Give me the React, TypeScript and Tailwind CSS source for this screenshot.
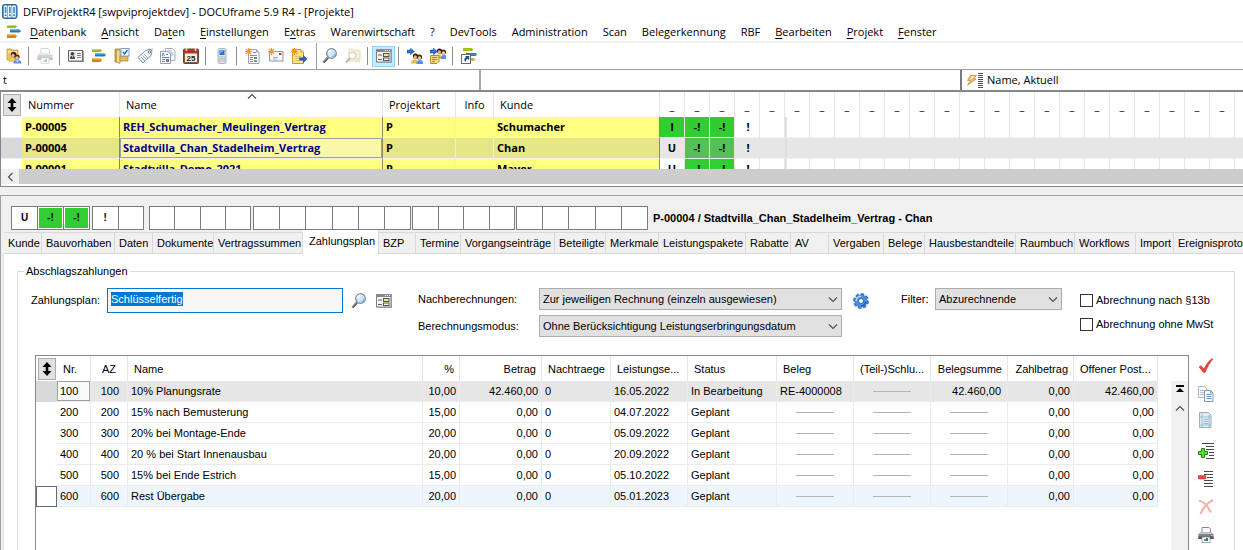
import { ReactNode, useState } from "react";
import clsx from "clsx";

interface MenuEntry {
    before: string;
    key: string;
    after: string;
}
interface Project {
    number: string;
    name: string;
    customer: string;
    flag: string;
    selected?: boolean;
}
interface Rate {
    nr: string;
    name: string;
    percent: string;
    amount: string;
    date: string;
    status: string;
    doc?: string;
    sum?: string;
    open: string;
}

const menu: MenuEntry[] = [
    { before: "", key: "D", after: "atenbank" },
    { before: "", key: "A", after: "nsicht" },
    { before: "Da", key: "t", after: "en" },
    { before: "", key: "E", after: "instellungen" },
    { before: "E", key: "x", after: "tras" },
    { before: "Warenwirtschaft", key: "", after: "" },
    { before: "?", key: "", after: "" },
    { before: "DevTools", key: "", after: "" },
    { before: "Administration", key: "", after: "" },
    { before: "Scan", key: "", after: "" },
    { before: "Belegerkennung", key: "", after: "" },
    { before: "RBF", key: "", after: "" },
    { before: "", key: "B", after: "earbeiten" },
    { before: "", key: "P", after: "rojekt" },
    { before: "", key: "F", after: "enster" },
];

const projects: Project[] = [
    { number: "P-00005", name: "REH_Schumacher_Meulingen_Vertrag", customer: "Schumacher", flag: "I" },
    { number: "P-00004", name: "Stadtvilla_Chan_Stadelheim_Vertrag", customer: "Chan", flag: "U", selected: true },
    { number: "P-00001", name: "Stadtvilla_Demo_2021", customer: "Mayer", flag: "U" },
];

const rates: Rate[] = [
    { nr: "100", name: "10% Planungsrate", percent: "10,00", amount: "42.460,00", date: "16.05.2022", status: "In Bearbeitung", doc: "RE-4000008", sum: "42.460,00", open: "42.460,00" },
    { nr: "200", name: "15% nach Bemusterung", percent: "15,00", amount: "0,00", date: "04.07.2022", status: "Geplant", open: "0,00" },
    { nr: "300", name: "20% bei Montage-Ende", percent: "20,00", amount: "0,00", date: "05.09.2022", status: "Geplant", open: "0,00" },
    { nr: "400", name: "20 % bei Start Innenausbau", percent: "20,00", amount: "0,00", date: "20.09.2022", status: "Geplant", open: "0,00" },
    { nr: "500", name: "15% bei Ende Estrich", percent: "15,00", amount: "0,00", date: "05.10.2022", status: "Geplant", open: "0,00" },
    { nr: "600", name: "Rest Übergabe", percent: "20,00", amount: "0,00", date: "05.01.2023", status: "Geplant", open: "0,00" },
];

const tabs = [
    { label: "Kunde", width: "w-[38px]" },
    { label: "Bauvorhaben", width: "w-[73px]" },
    { label: "Daten", width: "w-[38px]" },
    { label: "Dokumente", width: "w-[61px]" },
    { label: "Vertragssummen", width: "w-[89px]" },
    { label: "Zahlungsplan", width: "w-[76px]" },
    { label: "BZP", width: "w-[37px]" },
    { label: "Termine", width: "w-[45px]" },
    { label: "Vorgangseinträge", width: "w-[94px]" },
    { label: "Beteiligte", width: "w-[51px]" },
    { label: "Merkmale", width: "w-[53px]" },
    { label: "Leistungspakete", width: "w-[87px]" },
    { label: "Rabatte", width: "w-[45px]" },
    { label: "AV", width: "w-[38px]" },
    { label: "Vergaben", width: "w-[55px]" },
    { label: "Belege", width: "w-[41px]" },
    { label: "Hausbestandteile", width: "w-[91px]" },
    { label: "Raumbuch", width: "w-[59px]" },
    { label: "Workflows", width: "w-[61px]" },
    { label: "Import", width: "w-[38px]" },
    { label: "Ereignisprotokoll", width: "w-[100px]" },
];

const statusGroups = [
    { width: "w-[79px]", cells: ["U", "-!", "-!"] },
    { width: "w-[52px] ml-0.5", cells: ["!", ""] },
    { width: "w-[102px] ml-[5px]", cells: ["", "", "", ""] },
    { width: "w-[158px] ml-0.5", cells: ["", "", "", "", "", ""] },
    { width: "w-[103px] ml-px", cells: ["", "", "", ""] },
    { width: "w-[132px] ml-px", cells: ["", "", "", "", ""] },
];

const flagColumns = Array.from({ length: 23 }, (_, i) => i);

const Svg = ({ children, size = 16 }: { children: ReactNode; size?: number }) => (
    <svg width={size} height={size} viewBox="0 0 16 16" aria-hidden="true" className="block shrink-0">
        {children}
    </svg>
);

const AppLogo = () => (
    <Svg>
        <rect x="0.500" y="0.500" width="14.500" height="14" rx="2" fill="#3d88bd" stroke="#2468a0" />
        {[1.8, 6, 10.2].map((x) => (
            <g key={x}>
                <rect x={x} y="1.500" width="3.600" height="12" rx="1" fill="#f2f8fc" />
                <rect x={x + 1} y="3" width="1.600" height="6" fill="#3d88bd" />
                <rect x={x + 1} y="10.500" width="1.600" height="1.600" fill="#2a6da3" />
            </g>
        ))}
    </Svg>
);

const BarsIcon = () => (
    <Svg>
        <path d="M1 1h8.500L11 2.500 9.500 4H1z" fill="#9cba1c" />
        <path d="M1 1h8.500l.8.900H1z" fill="#c9dc5c" />
        <path d="M4 5.500h9.500L15 7l-1.500 1.500H4z" fill="#1a78b8" />
        <path d="M4 5.500h9.500l.8.900H4z" fill="#5aaede" />
        <path d="M1 10.500h8.500L11 12l-1.500 2H1z" fill="#d0821c" />
        <path d="M1 10.500h8.500l.8.900H1z" fill="#efb660" />
    </Svg>
);

const FolderUserIcon = () => (
    <Svg>
        <path d="M1 1h4l1 1h6v10H1z" fill="#e9c45c" stroke="#c79a3a" strokeWidth="0.800" />
        <path d="M2 3h9v2H2z" fill="#f7e29a" />
        <circle cx="7.500" cy="6.500" r="2.700" fill="#3a2216" />
        <circle cx="11" cy="9" r="2.600" fill="#4a2c1a" />
        <circle cx="7" cy="7.500" r="1.700" fill="#e8b48a" />
        <circle cx="11" cy="10" r="1.800" fill="#f0c09a" />
        <path d="M3 14c0-3 2-4 4-4s3 1 3 4z" fill="#f0c860" />
        <path d="M7.500 15.500c0-3 1.500-3.500 4-3.500s4 1 4 3.500z" fill="#4d8ff0" />
        <path d="M10 12.500l1.500 2 1.300-2z" fill="#fff" />
    </Svg>
);

const PrinterIcon = ({ faded = false }: { faded?: boolean }) => (
    <Svg>
        <g opacity={faded ? 0.35 : 1}>
            <path d="M4 0.500h7l1.500 1.500V6H4z" fill="#fff" stroke="#8a8a8a" />
            <path d="M2 5.500h12l1.500 2V12h-15V7.500z" fill="#7c8187" />
            <path d="M2 5.500h12l1 1.500H1z" fill="#c9cdd2" />
            <path d="M0.500 9.500h15V12h-15z" fill="#4c5055" />
            <rect x="13" y="8" width="1.500" height="1" fill="#a8e060" />
            <path d="M4 10h8v5.500H4z" fill="#fff" stroke="#8a8a8a" strokeWidth="0.800" />
            <path d="M6 12h2v2H6z" fill="#2f9bd0" />
            <path d="M8 11h2v3H8z" fill="#3d7550" />
        </g>
    </Svg>
);

const CardIcon = () => (
    <Svg>
        <path d="M1 3h15v11H1z" fill="#9a9a9a" />
        <rect x="0.500" y="2.500" width="14" height="10.500" fill="#fff" stroke="#6a6a6a" />
        <rect x="1.500" y="4" width="6" height="7" fill="#d4d4d4" />
        <circle cx="4.500" cy="5.800" r="1.700" fill="#444" />
        <path d="M2 11c0-2.500 1-3.200 2.500-3.200S7 8.500 7 11z" fill="#444" />
        <path d="M4 8.200l.5 2 .5-2z" fill="#fff" />
        <path d="M9 5.500h4M9 7.500h4M9 9.500h4" stroke="#777" />
    </Svg>
);

const FolderCheckIcon = () => (
    <Svg>
        <path d="M1 1h5v13H1z" fill="#d8b24a" stroke="#a88434" strokeWidth="0.800" />
        <path d="M2.500 2H6v13.500L2.500 14z" fill="#f4dc8c" stroke="#b8923c" strokeWidth="0.800" />
        <path d="M6 8h8v5H6z" fill="#e2bc58" stroke="#b08a38" strokeWidth="0.800" />
        <rect x="7" y="0.500" width="8" height="7.500" fill="#fff" stroke="#7a9cc0" />
        <path d="M9 4l1.500 2 3-4" stroke="#1c5fa8" strokeWidth="1.300" fill="none" />
    </Svg>
);

const TagIcon = () => (
    <Svg>
        <path d="M8.500 2.500l4.500-1.500 2 2-1 4.500L6 15 1 9.500z" fill="#f4f6f8" stroke="#7a8ea2" />
        <circle cx="12.300" cy="4" r="1.200" fill="#fff" stroke="#5f7488" />
        <path d="M4 9l4 4M5.500 7.500l4 4M7 6l4 4" stroke="#8fa2b4" strokeWidth="0.900" />
        <path d="M14 2.500L16 0.500" stroke="#7c8c9c" />
    </Svg>
);

const DocsIcon = () => (
    <Svg>
        <path d="M5.500 0.500h7L15 3v9.500H5.500z" fill="#fff" stroke="#a4b0bc" />
        <path d="M8 3h4M8 5h5M8 7h5" stroke="#8fb0dc" />
        <path d="M0.500 3.500h7.500L10.500 6v9.500h-10z" fill="#f7f9fc" stroke="#94a2b0" />
        <path d="M2 8l1.200-3L4.500 8M6 6.500h2M2 9.500h7M2 11.500h3M2 13.500h3" stroke="#5a86c4" fill="none" />
        <rect x="6" y="11" width="3" height="3" fill="#6a7fb0" />
    </Svg>
);

const CalendarIcon = () => (
    <Svg>
        <rect x="0.500" y="1" width="15" height="14.500" rx="1" fill="#8a5a40" stroke="#6a4430" />
        <rect x="1" y="1.500" width="14" height="4" fill="#b8322a" />
        <path d="M3.500 0v3M12.500 0v3" stroke="#ddd" strokeWidth="1.500" />
        <rect x="2" y="5.500" width="12" height="8.500" fill="#f6efe0" />
        <text x="8" y="12.500" textAnchor="middle" fontSize="8" fontWeight="700" fontFamily="Liberation Sans, sans-serif" fill="#1a1a1a">25</text>
    </Svg>
);

const PhoneIcon = () => (
    <Svg>
        <rect x="4" y="0.500" width="8" height="15" rx="1.500" fill="#e2e6ea" stroke="#a8b0b8" />
        <rect x="5.500" y="2" width="5" height="5" fill="#2a72c8" />
        <path d="M5.500 2h5L5.500 6z" fill="#6aa8ea" />
        <path d="M5.200 9h1.500M7.300 9h1.500M9.400 9h1.500M5.200 11h1.500M7.300 11h1.500M9.400 11h1.500M5.200 13h1.500M7.300 13h1.500M9.400 13h1.500" stroke="#98a0aa" strokeWidth="1.200" />
    </Svg>
);

const Spark = () => (
    <path d="M3.500 0v7M0 3.500h7M1 1l5 5M6 1L1 6" stroke="#f09a1a" strokeWidth="1.100" />
);

const NewDocIcon = () => (
    <Svg>
        <path d="M3.500 1.500h8L14 4v11.500H3.500z" fill="#fff" stroke="#9aa6b2" />
        <path d="M11.500 1.500V4H14" fill="#c4d0dc" stroke="#9aa6b2" />
        <path d="M8 4.500h3M5 7.500h7M5 9.500h3M5 11.500h3M5 13.500h3" stroke="#6a94c8" />
        <rect x="9" y="9" width="3" height="2" fill="#5b9a50" />
        <rect x="9" y="12" width="3" height="2" fill="#7a8cb8" />
        <Spark />
    </Svg>
);

const NewMailIcon = () => (
    <Svg>
        <rect x="1.500" y="3.500" width="13.500" height="9.500" fill="#f6f7f9" stroke="#8f98a2" />
        <rect x="11" y="5" width="2.500" height="2" fill="#d23a2a" />
        <path d="M5 9.500h5M5 11h4" stroke="#b0b8c0" />
        <Spark />
    </Svg>
);

const NewNoteIcon = () => (
    <Svg>
        <path d="M1.500 1.500h8.500L12.500 4v11.500H1.500z" fill="#fbe392" stroke="#c69c34" />
        <path d="M10 1.500V4h2.500" fill="#fff4c8" stroke="#c69c34" />
        <path d="M4 8.500h6M4 10.500h4M4 12.500h4" stroke="#e0bc5c" />
        <path d="M8.500 9.800h4V7.500l3.500 3.500-3.500 3.500v-2.300h-4z" fill="#2a62c8" stroke="#183f90" strokeWidth="0.500" />
        <Spark />
    </Svg>
);

const LensIcon = () => (
    <Svg>
        <path d="M6 9.500L1.500 14.500" stroke="#4a5058" strokeWidth="2.400" />
        <path d="M5.800 9.200L1.200 14.200" stroke="#a8b0b8" strokeWidth="0.900" />
        <circle cx="9.500" cy="5.500" r="4.800" fill="#d4e8fb" stroke="#788898" strokeWidth="1.200" />
        <path d="M6.500 5.200a3.200 3.200 0 013-3" stroke="#fff" strokeWidth="1.500" fill="none" />
        <path d="M12.800 5.700a3.300 3.300 0 01-3 3" stroke="#8abcf0" strokeWidth="1.200" fill="none" />
    </Svg>
);

const FolderLensIcon = () => (
    <Svg>
        <g opacity="0.400">
            <path d="M4 1h4l1 1h6v11H4z" fill="#efd488" stroke="#d8b468" />
            <path d="M5.500 9.500L1 14.500" stroke="#555" strokeWidth="2" />
            <circle cx="7.500" cy="7.500" r="3.500" fill="#f4f8fc" stroke="#777" />
            <path d="M11 10h4v5l-2-1.500L11 15z" fill="#d8bb78" />
        </g>
    </Svg>
);

const FormIcon = () => (
    <Svg>
        <path d="M1.500 2.500h14.500V15H1.500z" fill="#b4b8bc" />
        <rect x="0.500" y="1.500" width="14.500" height="12.500" fill="#f4f4f0" stroke="#7a8086" />
        <path d="M0 1h15.500v3H0z" fill="#83898f" />
        <path d="M9 2.500h1M11 2.500h1M13 2.500h1" stroke="#fff" />
        <path d="M2 7h4M2 11.500h4" stroke="#5c6064" />
        <rect x="7.500" y="5.500" width="5.500" height="3" fill="#f6ec70" stroke="#50545a" />
        <rect x="7.500" y="10" width="5.500" height="2.500" fill="#fff" stroke="#50545a" />
    </Svg>
);

const PeopleArrowIcon = ({ note = false }: { note?: boolean }) => (
    <Svg>
        <g transform={note ? "translate(1 -5)" : ""}>
            <circle cx="8.500" cy="8" r="2.600" fill="#241510" />
            <circle cx="12.500" cy="9" r="2.600" fill="#4a2818" />
            <circle cx="8.300" cy="9" r="1.700" fill="#e8b48a" />
            <circle cx="12.500" cy="10" r="1.700" fill="#f2c4a0" />
            <path d="M4 15.500c0-3 2-4 4-4s3 1.500 3 4z" fill="#f2b83a" />
            <path d="M9.500 16c0-3 1.500-4 3.500-4s3 1 3 4z" fill="#4f90f2" />
        </g>
        {note && (
            <>
                <path d="M0.500 7.500h8.500v6l-2 2H0.500z" fill="#f8dc84" stroke="#b08a30" />
                <path d="M2 9.500h5M2 11.500h5M2 13.500h3" stroke="#a88438" />
            </>
        )}
        <path d="M0 2h3.500V0.300L7.500 3.500l-4 3.200V5H0z" fill="#2f6fd8" stroke="#1c4a9c" strokeWidth="0.500" />
    </Svg>
);

const ShortcutIcon = () => (
    <Svg>
        <path d="M2 0h9l1.200 1.500L11 3H2z" fill="#a4c020" />
        <path d="M5 5h9.500L16 6.500 14.500 8H5z" fill="#2484c4" />
        <path d="M8 10h5l1.500 1.500L13 13H8z" fill="#e0a850" />
        <rect x="0.500" y="6.500" width="9" height="9" fill="#fff" stroke="#6a6a6a" />
        <path d="M4 8h4.200v4.200L6.800 10.800C5.500 11.500 5 12.500 4.500 14 2.500 12 3.500 10 5.300 9.300z" fill="#1c4a98" />
    </Svg>
);

const LightningIcon = () => (
    <Svg size={12}>
        <path d="M6 2h8L9.500 6.500h4L2 15l4-6.500H2z" fill="#f6c060" stroke="#c4824c" />
        <path d="M6.500 3h5L7 7.500z" fill="#fff0c0" />
    </Svg>
);

const GearIcon = () => (
    <Svg>
        {[0, 45, 90, 135].map((a) => (
            <rect key={a} x="6.200" y="0.400" width="3.600" height="15.200" rx="1.200" fill="#3a7fd4" stroke="#245fa8" strokeWidth="0.500" transform={`rotate(${a + 12} 8 8)`} />
        ))}
        <circle cx="8" cy="8" r="5.700" fill="#4a90e0" />
        <path d="M3.200 8A4.900 4.900 0 018 3.200" stroke="#b4dafc" strokeWidth="1.600" fill="none" />
        <path d="M12.700 8.500A4.800 4.800 0 018 12.800" stroke="#2460b4" strokeWidth="1.400" fill="none" />
        <circle cx="8" cy="8" r="2.500" fill="#fff" stroke="#2a68b8" strokeWidth="1" />
    </Svg>
);

const CheckIcon = () => (
    <Svg>
        <path d="M1 9l2.200-1.200L6 11C8 7 10.500 3 14 0.500l.8.800C11.500 5 9 10 7 14.500H5.500z" fill="#f23c3c" stroke="#cc2828" strokeWidth="0.500" />
    </Svg>
);

const CopyIcon = () => (
    <Svg>
        <path d="M0.500 0.500h6L9 3v8.500H0.500z" fill="#f4f6f8" stroke="#b4bac0" />
        <path d="M2 4.500h4M2 6.500h4M2 8.500h4" stroke="#b4c4d8" />
        <path d="M6.500 4.500h6L15 7v8.500H6.500z" fill="#f4f8fc" stroke="#909aa4" />
        <path d="M12.500 4.500V7H15" fill="none" stroke="#909aa4" />
        <path d="M8.500 8.500h5M8.500 10.500h5M8.500 12.500h5" stroke="#6a9ad0" />
    </Svg>
);

const SheetIcon = () => (
    <Svg>
        <path d="M1.500 0.500h9L13 3v12.500H1.500z" fill="#e8ecef" stroke="#a4abb2" />
        <path d="M4 1v14M11 3v12M1 5h12M1 13h12" stroke="#8cc4e4" />
        <path d="M5.500 7.500h4.500M5.500 9.500h4.500M5.500 11.500h4.500" stroke="#b0b6bc" />
    </Svg>
);

const LinesAddIcon = () => (
    <Svg>
        <path d="M4 0.500h12M8 3.500h8M8 6.500h8M11 9.500h5M11 12.500h5M8 15.500h8" stroke="#4a4a4a" />
        <path d="M3.500 5.500h3v3h3v3h-3v3h-3v-3h-3v-3h3z" fill="#5cdc30" stroke="#1c8a10" />
    </Svg>
);

const LinesRemoveIcon = () => (
    <Svg>
        <path d="M6 0.500h9M6 3.500h9M9 6.500h6M6 9.500h9M6 12.500h9M6 15.500h9" stroke="#4a4a4a" />
        <rect x="0" y="4.500" width="8" height="3.500" rx="1" fill="#f04444" stroke="#d02828" strokeWidth="0.500" />
    </Svg>
);

const CrossIcon = () => (
    <Svg>
        <path d="M1 1.500c4 1 9 6 12 12M15 1C9 4 5 9 2.500 15" stroke="#f2b4ac" strokeWidth="2.200" fill="none" />
    </Svg>
);

const SortIcon = () => (
    <svg width="10" height="14" viewBox="0 0 10 14" aria-hidden="true" className="mx-auto block">
        <path d="M5 0l4.500 5H6.300v4h3.200L5 14 0.500 9h3.200V5H0.500z" fill="#000" />
    </svg>
);

const Chevron = ({ className }: { className?: string }) => (
    <svg width="10" height="6" viewBox="0 0 10 6" aria-hidden="true" className={className}>
        <path d="M1 0.500l4 4 4-4" stroke="#505050" strokeWidth="1.200" fill="none" />
    </svg>
);

const toolbar: { name: string; icon?: ReactNode; divider?: boolean; active?: boolean; full?: boolean }[] = [
    { name: "Adressen", icon: <FolderUserIcon /> },
    { name: "d1", divider: true },
    { name: "Drucken", icon: <PrinterIcon faded /> },
    { name: "d2", divider: true },
    { name: "Visitenkarte", icon: <CardIcon /> },
    { name: "Projekte", icon: <BarsIcon /> },
    { name: "Aufgaben", icon: <FolderCheckIcon /> },
    { name: "Etikett", icon: <TagIcon /> },
    { name: "Dokumente", icon: <DocsIcon /> },
    { name: "Kalender", icon: <CalendarIcon /> },
    { name: "d3", divider: true },
    { name: "Telefon", icon: <PhoneIcon /> },
    { name: "d4", divider: true },
    { name: "Neues Dokument", icon: <NewDocIcon /> },
    { name: "Neue E-Mail", icon: <NewMailIcon /> },
    { name: "Neue Notiz", icon: <NewNoteIcon /> },
    { name: "d5", divider: true, full: true },
    { name: "Suchen", icon: <LensIcon /> },
    { name: "Ordnersuche", icon: <FolderLensIcon /> },
    { name: "d6", divider: true },
    { name: "Formular", icon: <FormIcon />, active: true },
    { name: "d7", divider: true },
    { name: "Weiterleiten", icon: <PeopleArrowIcon /> },
    { name: "Notiz senden", icon: <PeopleArrowIcon note /> },
    { name: "d8", divider: true },
    { name: "Verknüpfung", icon: <ShortcutIcon /> },
];

const sideActions = [
    { name: "Übernehmen", icon: <CheckIcon />, space: "" },
    { name: "Kopieren", icon: <CopyIcon />, space: "mt-3" },
    { name: "Tabelle", icon: <SheetIcon />, space: "mt-2.5" },
    { name: "Zeile einfügen", icon: <LinesAddIcon />, space: "mt-[15px]" },
    { name: "Zeile entfernen", icon: <LinesRemoveIcon />, space: "mt-3" },
    { name: "Löschen", icon: <CrossIcon />, space: "mt-3" },
    { name: "Liste drucken", icon: <PrinterIcon />, space: "mt-3" },
];

const ProjectTable = () => (
    <div className="h-[77px] overflow-hidden">
        <table className="w-full table-fixed border-separate border-spacing-0 text-left font-['Open_Sans',sans-serif] text-[11px] leading-4 whitespace-nowrap">
            <colgroup>
                <col className="w-[21px]" />
                <col className="w-[98px]" />
                <col className="w-[263px]" />
                <col className="w-[73px]" />
                <col className="w-[38px]" />
                <col className="w-[166px]" />
                {flagColumns.map((i) => <col key={i} className="w-[25px]" />)}
                <col />
            </colgroup>
            <thead>
                <tr className="h-[25px] [&>th]:border-r [&>th]:border-[#e5e5e5] [&>th]:p-0 [&>th]:font-normal">
                    <th className="border-r-0!">
                        <button aria-label="Spalten" className="ml-0.5 block h-[22px] w-[18px] border border-[#adadad] bg-[#e1e1e1]"><SortIcon /></button>
                    </th>
                    <th><span className="ml-1.5">Nummer</span></th>
                    <th className="relative">
                        <span className="ml-1.5">Name</span>
                        <Chevron className="absolute top-px left-[127px] rotate-180" />
                    </th>
                    <th><span className="ml-1.5">Projektart</span></th>
                    <th className="text-center">Info</th>
                    <th><span className="ml-1.5">Kunde</span></th>
                    {flagColumns.map((i) => <th key={i} className="pt-[3px]! text-center">_</th>)}
                    <th className="border-r-0!"></th>
                </tr>
            </thead>
            <tbody>
                {projects.map((p) => {
                    const yellow = p.selected ? "bg-[#e6e687]" : "bg-[#ffff80]";
                    const green = p.selected ? "bg-[#56c056]" : "bg-[#32cd32]";
                    return (
                        <tr key={p.number} className={clsx("h-[21px] font-bold [&>td]:border-r [&>td]:border-b [&>td]:border-b-[#f0f0f0] [&>td]:border-r-[#e5e5e5] [&>td]:p-0", p.selected && "bg-[#e6e6e6]")}>
                            <td className={clsx("border-r-0!", p.selected && "bg-[#d9d9d9]")}></td>
                            <td className={clsx("border-r-[#8a8a60]! pl-[3px]!", yellow)}>{p.number}</td>
                            <td className={clsx("border-r-[#8a8a60]! pl-[3px]! text-[#000080]", p.selected ? "bg-[#f8f8a8] shadow-[inset_0_0_0_1px_#a0a0a0]" : "bg-[#ffff80]")}>{p.name}</td>
                            <td className={clsx("border-r-[#f4f4c0]! pl-[3px]!", yellow)}>P</td>
                            <td className={clsx("border-r-[#f4f4c0]!", yellow)}></td>
                            <td className={clsx("border-r-[#8a8a60]! pl-[3px]!", yellow)}>{p.customer}</td>
                            <td className={clsx("text-center", p.flag === "I" && green)}>{p.flag}</td>
                            <td className={clsx("text-center", green)}>-!</td>
                            <td className={clsx("text-center", green)}>-!</td>
                            <td className="pl-0.5! text-center">!</td>
                            <td></td>
                            {flagColumns.slice(5).map((i) => (
                                <td key={i} className={i === 5 ? "border-l-2 border-l-[#e0e0e0]" : ""}></td>
                            ))}
                            <td className="border-r-0!"></td>
                        </tr>
                    );
                })}
            </tbody>
        </table>
    </div>
);

const Dash = () => <span className="mx-auto block h-px w-[38px] bg-[#b4b4b4]" />;

const RateTable = () => (
    <table className="w-full table-fixed border-separate border-spacing-0 text-left whitespace-nowrap">
        <colgroup>
            <col className="w-[21px]" />
            <col className="w-[34px]" />
            <col className="w-[37px]" />
            <col />
            <col className="w-[37px]" />
            <col className="w-[82px]" />
            <col className="w-[69px]" />
            <col className="w-[77px]" />
            <col className="w-[89px]" />
            <col className="w-[77px]" />
            <col className="w-[77px]" />
            <col className="w-[77px]" />
            <col className="w-[66px]" />
            <col className="w-[84px]" />
            <col className="w-[13px]" />
        </colgroup>
        <thead>
            <tr className="h-[25px] [&>th]:border-r [&>th]:border-[#e5e5e5] [&>th]:px-1.5 [&>th]:py-0 [&>th]:font-normal">
                <th className="border-r-0! px-0!">
                    <button aria-label="Spalten" className="ml-0.5 block h-[22px] w-[18px] border border-[#adadad] bg-[#e1e1e1]"><SortIcon /></button>
                </th>
                <th>Nr.</th>
                <th className="text-center">AZ</th>
                <th>Name</th>
                <th className="px-[5px]! text-right">%</th>
                <th className="px-[5px]! text-right">Betrag</th>
                <th>Nachtraege</th>
                <th>Leistungse...</th>
                <th>Status</th>
                <th>Beleg</th>
                <th>(Teil-)Schlu...</th>
                <th className="px-[5px]! text-right">Belegsumme</th>
                <th className="px-[5px]! text-right">Zahlbetrag</th>
                <th className="pr-0!">Offener Post...</th>
                <th className="border-r-0!"></th>
            </tr>
        </thead>
        <tbody>
            {rates.map((r, i) => {
                const first = i === 0;
                const last = i === rates.length - 1;
                return (
                    <tr
                        key={r.nr}
                        className={clsx(
                            "h-[21px] [&>td]:border-r [&>td]:border-b [&>td]:border-[#ebebeb] [&>td]:px-[3px] [&>td]:py-0",
                            first && "bg-[#e6e6e6]",
                            last && "bg-[#eef5fc]"
                        )}
                    >
                        <td className={clsx("border-r-0! border-b-0!", first ? "bg-[#d9d9d9]" : "bg-white", last && "shadow-[inset_0_0_0_1px_#6a6a6a]")}></td>
                        <td className={clsx(first && "bg-[#fafafa] shadow-[inset_0_0_0_1px_#a0a0a0]")}>{r.nr}</td>
                        <td className="px-2! text-right">{r.nr}</td>
                        <td>{r.name}</td>
                        <td className="text-right">{r.percent}</td>
                        <td className="text-right">{r.amount}</td>
                        <td>0</td>
                        <td>{r.date}</td>
                        <td>{r.status}</td>
                        <td>{r.doc ?? <Dash />}</td>
                        <td><Dash /></td>
                        <td className={r.sum ? "pr-1.5! text-right" : ""}>{r.sum ?? <Dash />}</td>
                        <td className="text-right">0,00</td>
                        <td className="text-right">{r.open}</td>
                        <td className="border-0! bg-white"></td>
                    </tr>
                );
            })}
        </tbody>
    </table>
);

interface SelectProps {
    id: string;
    value: string;
}
const Select = ({ id, value }: SelectProps) => (
    <div className="relative">
        <select id={id} className="block h-[22px] w-full appearance-none border border-[#adadad] bg-[#e1e1e1] pl-[3px] text-[11px]">
            <option>{value}</option>
        </select>
        <Chevron className="pointer-events-none absolute top-[9px] right-1" />
    </div>
);

const App = () => {
    const [activeTab, setActiveTab] = useState("Zahlungsplan");
    const [plan, setPlan] = useState("Schlüsselfertig");

    return (
        <div className="flex h-screen flex-col overflow-hidden bg-[#f0f0f0] font-['Liberation_Sans',Arial,sans-serif] text-[11px] leading-4 text-black">
            <header className="bg-white font-['Open_Sans',sans-serif] whitespace-nowrap">
                <div className="flex h-[23px] items-center gap-[5px] pl-0.5">
                    <AppLogo />
                    <h1>DFViProjektR4 [swpviprojektdev] - DOCUframe 5.9 R4 - [Projekte]</h1>
                </div>
                <nav className="flex h-5 items-center gap-[15px] border-b-2 border-[#f0f0f0] pl-1.5">
                    <span className="-mr-[7px]"><BarsIcon /></span>
                    {menu.map((m) => (
                        <button key={m.before + m.key + m.after}>
                            {m.before}<span className="underline underline-offset-2">{m.key}</span>{m.after}
                        </button>
                    ))}
                </nav>
                <div className="flex h-[26px] items-center pl-0.5">
                    {toolbar.map((t) =>
                        t.divider ? (
                            <span key={t.name} className={clsx("shrink-0", t.full ? "mr-px ml-1.5 h-full w-px bg-[#a0a0a0]" : "mr-1 ml-[3px] h-[18px] w-px bg-[#8c8c8c]")} />
                        ) : (
                            <button key={t.name} aria-label={t.name} className={clsx("flex h-[21px] w-[23px] shrink-0 items-center justify-center", t.active && "border border-[#99d1ff] bg-[#cce8ff]")}>
                                {t.icon}
                            </button>
                        )
                    )}
                </div>
            </header>

            <div className="flex h-[23px] border-t border-b-2 border-t-[#a0a0a0] border-b-[#828790] bg-white font-['Open_Sans',sans-serif]">
                <input aria-label="Nummer suchen" defaultValue="t" className="w-[481px] border-r-2 border-[#a8a8ac] px-[3px] outline-none" />
                <input aria-label="Name suchen" className="w-[479px] px-[3px] outline-none" />
                <button className="flex flex-1 items-center border-l-2 border-[#7a7a7e] pl-1 text-left">
                    <LightningIcon />
                    <svg width="5" height="16" viewBox="0 0 5 16" aria-hidden="true" className="mr-1">
                        <path d="M0 1.500h5M0 3.500h5M0 5.500h5M0 7.500h5M0 9.500h5M0 11.500h5M0 13.500h5M0 15.500h5" stroke="#505050" />
                    </svg>
                    Name, Aktuell
                </button>
            </div>

            <section className="border-b border-l border-[#828790] bg-white">
                <ProjectTable />
                <div className="mb-0.5 flex h-[15px] bg-[#f0f0f0]">
                    <button aria-label="Nach links" className="flex w-[18px] items-center justify-center">
                        <Chevron className="rotate-90" />
                    </button>
                    <div className="flex-1 bg-[#cdcdcd]" />
                </div>
            </section>

            <main className="mt-2 flex min-h-0 flex-1 flex-col border-t border-l border-[#a0a0a0]">
                <div className="mt-2.5 flex items-center pl-2.5">
                    {statusGroups.map((g, i) => (
                        <div key={i} className={clsx("flex h-6 shrink-0", g.width)}>
                            {g.cells.map((c, j) => (
                                <span key={j} className={clsx("flex flex-1 items-center justify-center border border-[#7a7a7a] text-[10px] font-bold", j > 0 && "-ml-px", c === "-!" ? "bg-[#32cd32] shadow-[inset_0_0_0_1px_#fff]" : "bg-white")}>
                                    {c}
                                </span>
                            ))}
                        </div>
                    ))}
                    <h2 className="ml-[5px] font-bold whitespace-nowrap">P-00004 / Stadtvilla_Chan_Stadelheim_Vertrag - Chan</h2>
                </div>

                <div role="tablist" className="flex h-6 items-end overflow-hidden pl-[3px]">
                    {tabs.map((t) => (
                        <button
                            key={t.label}
                            role="tab"
                            aria-selected={activeTab === t.label}
                            onClick={() => setActiveTab(t.label)}
                            className={clsx(
                                "shrink-0 overflow-hidden border-r border-[#d9d9d9] text-left whitespace-nowrap",
                                t.width,
                                activeTab === t.label ? "h-6 bg-white pb-0.5 pl-1.5" : "h-[22px] border-y bg-[#f0f0f0] pl-1"
                            )}
                        >
                            {t.label}
                        </button>
                    ))}
                </div>

                <div className="ml-0.5 flex min-h-0 flex-1 flex-col border-l border-[#e0e0e0] bg-white pt-[9px] pr-2 pl-[13px]">
                    <fieldset className="flex min-h-0 flex-1 flex-col border border-b-0 border-[#dcdcdc] pl-[13px]">
                        <legend className="-ml-[7px] px-0.5">Abschlagszahlungen</legend>
                        <div className="mt-[9px] flex items-start">
                            <div className="flex h-[25px] items-center">
                                <label htmlFor="plan" className="w-[76px] pb-0.5">Zahlungsplan:</label>
                                <div className="flex h-[25px] w-[236px] border border-[#0078d7] bg-[#f7f7f7] px-[3px] pt-[3px]">
                                    <input
                                        id="plan"
                                        value={plan}
                                        onChange={(e) => setPlan(e.target.value)}
                                        className="field-sizing-content h-3.5 bg-[#0078d7] text-white outline-none"
                                    />
                                </div>
                                <button aria-label="Zahlungsplan suchen" className="ml-2"><LensIcon /></button>
                                <button aria-label="Zahlungsplan öffnen" className="ml-[9px]"><FormIcon /></button>
                            </div>
                            <div className="ml-[26px] grid grid-cols-[121px_303px] items-center gap-y-[5px]">
                                <label htmlFor="calc">Nachberechnungen:</label>
                                <Select id="calc" value="Zur jeweiligen Rechnung (einzeln ausgewiesen)" />
                                <label htmlFor="mode">Berechnungsmodus:</label>
                                <Select id="mode" value="Ohne Berücksichtigung Leistungserbringungsdatum" />
                            </div>
                            <button aria-label="Einstellungen" className="mt-[5px] ml-[11px]"><GearIcon /></button>
                            <div className="ml-8 grid grid-cols-[34px_127px] items-center">
                                <label htmlFor="filter">Filter:</label>
                                <Select id="filter" value="Abzurechnende" />
                            </div>
                            <div className="mt-1 ml-[18px] flex flex-col gap-2">
                                <label className="flex items-center gap-[3px]">
                                    <input type="checkbox" className="size-[13px] appearance-none border border-[#333] bg-white" />
                                    Abrechnung nach §13b
                                </label>
                                <label className="flex items-center gap-[3px]">
                                    <input type="checkbox" className="size-[13px] appearance-none border border-[#333] bg-white" />
                                    Abrechnung ohne MwSt
                                </label>
                            </div>
                        </div>

                        <div className="mt-[18px] ml-1 flex min-h-0 flex-1">
                            <div className="flex min-w-0 flex-1 border border-b-0 border-[#828790]">
                                <div className="min-w-0 flex-1"><RateTable /></div>
                                <div className="mt-[25px] flex w-[17px] flex-col items-center bg-[#f0f0f0] pt-1">
                                    <svg width="8" height="8" viewBox="0 0 8 8" aria-hidden="true">
                                        <path d="M0 0h8v2H0zM4 3l4 4H0z" fill="#000" />
                                    </svg>
                                    <Chevron className="mt-3 rotate-180" />
                                </div>
                            </div>
                            <div className="flex w-[45px] flex-col pt-[3px] pl-[9px]">
                                {sideActions.map((a) => (
                                    <button key={a.name} aria-label={a.name} className={clsx("w-4", a.space)}>{a.icon}</button>
                                ))}
                            </div>
                        </div>
                    </fieldset>
                </div>
            </main>
        </div>
    );
};

export default App;
